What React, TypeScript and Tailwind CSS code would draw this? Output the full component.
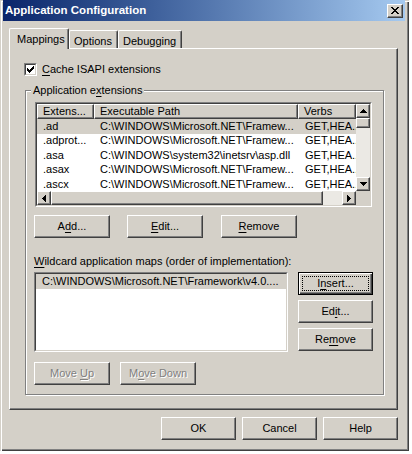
import type { ReactNode } from 'react';

const raised =
  'border border-t-white border-l-white border-r-[#404040] border-b-[#404040] bg-[#d4d0c8] shadow-[inset_-1px_-1px_#808080]';

function Btn({
  children,
  className = '',
  disabled = false,
  isDefault = false,
}: {
  children: ReactNode;
  className?: string;
  disabled?: boolean;
  isDefault?: boolean;
}) {
  if (isDefault) {
    return (
      <div
        className={`flex h-[23px] border border-black bg-[#d4d0c8] p-[3px] shadow-[inset_1px_1px_#fff,inset_-1px_-1px_#404040,inset_-2px_-2px_#808080] ${className}`}
      >
        <div className="flex flex-1 items-center justify-center border border-dotted border-black">
          {children}
        </div>
      </div>
    );
  }
  return (
    <div
      className={`flex h-[23px] items-center justify-center ${raised} ${
        disabled ? 'text-[#808080] [text-shadow:1px_1px_0_#fff]' : ''
      } ${className}`}
    >
      {children}
    </div>
  );
}

function U({ children }: { children: ReactNode }) {
  return <span className="underline underline-offset-[2px]">{children}</span>;
}

// sunken 2px frame used by list views, list boxes and the checkbox
function Sunken({ className = '', children }: { className?: string; children: ReactNode }) {
  return (
    <div className={`flex border border-t-[#808080] border-l-[#808080] border-r-white border-b-white ${className}`}>
      <div className="flex flex-1 flex-col overflow-hidden border border-t-[#404040] border-l-[#404040] border-r-[#d4d0c8] border-b-[#d4d0c8] bg-white">
        {children}
      </div>
    </div>
  );
}

function Arrow({ dir }: { dir: 'up' | 'down' | 'left' | 'right' }) {
  const vertical = dir === 'up' || dir === 'down';
  const d = {
    up: 'M3 0h1v1h1v1h1v1h1v1H0V3h1V2h1V1h1z',
    down: 'M0 0h7v1H6v1H5v1H4v1H3V3H2V2H1V1H0z',
    right: 'M0 0h1v1h1v1h1v1h1v1H3v1H2v1H1v1H0z',
    left: 'M4 0H3v1H2v1H1v1H0v1h1v1h1v1h1v1h1z',
  }[dir];
  return (
    <svg
      width={vertical ? 7 : 4}
      height={vertical ? 4 : 7}
      viewBox={vertical ? '0 0 7 4' : '0 0 4 7'}
      shapeRendering="crispEdges"
    >
      <path d={d} fill="#000" />
    </svg>
  );
}

function ScrollBtn({ dir, className = '' }: { dir: 'up' | 'down' | 'left' | 'right'; className?: string }) {
  return (
    <div className={`flex items-center justify-center ${raised} ${className}`}>
      <Arrow dir={dir} />
    </div>
  );
}

const path = 'C:\\WINDOWS\\Microsoft.NET\\Framew...';
const rows = [
  ['.ad', path, 'GET,HEA...'],
  ['.adprot...', path, 'GET,HEA...'],
  ['.asa', 'C:\\WINDOWS\\system32\\inetsrv\\asp.dll', 'GET,HEA...'],
  ['.asax', path, 'GET,HEA...'],
  ['.ascx', path, 'GET,HEA...'],
];

const xPixels: [number, number, number][] = [
  [0, 0, 2], [6, 0, 2],
  [1, 1, 2], [5, 1, 2],
  [2, 2, 4],
  [3, 3, 2],
  [2, 4, 4],
  [1, 5, 2], [5, 5, 2],
  [0, 6, 2], [6, 6, 2],
];

const checkCols = [2, 3, 4, 3, 2, 1, 0];

export default function App() {
  return (
    <div className="h-[454px] w-[412px] bg-white font-['Liberation_Sans',Arial,sans-serif] text-[11px] leading-[13px] text-black">
      <div className="flex h-[451px] w-[409px] flex-col bg-[#d4d0c8] pl-[3px] pr-[4px] shadow-[inset_1px_1px_#d4d0c8,inset_2px_2px_#fff,inset_-1px_-1px_#404040,inset_-2px_-2px_#808080]">
        {/* title bar */}
        <div className="flex h-[21px] items-center bg-linear-to-r from-[#0a246a] to-[#a6caf0] pl-[2px] pr-[2px]">
          <span className="text-[11.5px] font-bold text-white">Application Configuration</span>
          <div className={`ml-auto flex h-[14px] w-[16px] items-center justify-center ${raised}`}>
            <svg width="8" height="7" viewBox="0 0 8 7" shapeRendering="crispEdges">
              {xPixels.map(([x, y, w], i) => (
                <rect key={i} x={x} y={y} width={w} height={1} fill="#000" />
              ))}
            </svg>
          </div>
        </div>

        <div className="flex flex-col pl-[6px] pt-[7px]">
          {/* tabs */}
          <div className="flex h-[20px] items-end">
            <div className="relative z-10 -mb-[1px] h-[21px] w-[60px] rounded-t-[2px] border-l border-t border-r border-l-white border-t-white border-r-[#404040] bg-[#d4d0c8] pl-[7px] pt-[4px] shadow-[inset_-1px_0_#808080]">
              Mappings
            </div>
            <div className="h-[18px] w-[49px] rounded-t-[2px] border-l border-t border-r border-l-white border-t-white border-r-[#404040] pl-[4px] pt-[4px] shadow-[inset_-1px_0_#808080]">
              Options
            </div>
            <div className="h-[18px] w-[64px] rounded-t-[2px] border-l border-t border-r border-l-white border-t-white border-r-[#404040] pl-[4px] pt-[4px] shadow-[inset_-1px_0_#808080]">
              Debugging
            </div>
          </div>

          {/* tab panel */}
          <div className="flex h-[362px] w-[389px] flex-col border border-t-white border-l-white border-r-[#404040] border-b-[#404040] shadow-[inset_-1px_-1px_#808080]">
            <div className="ml-[14px] mt-[14px] flex h-[13px] items-center gap-[5px]">
              <Sunken className="h-[13px] w-[13px]">
                <div className="flex flex-1 items-center justify-center">
                  <svg width="7" height="7" viewBox="0 0 7 7" shapeRendering="crispEdges">
                    {checkCols.map((y, x) => (
                      <rect key={x} x={x} y={y} width={1} height={3} fill="#000" />
                    ))}
                  </svg>
                </div>
              </Sunken>
              <span>
                <U>C</U>ache ISAPI extensions
              </span>
            </div>

            {/* group box */}
            <div className="ml-[15px] mt-[14px] flex h-[305px] w-[359px] flex-col border border-[#808080] shadow-[inset_1px_1px_#fff,1px_1px_#fff]">
              <span className="-mt-[7px] ml-[5px] h-[13px] self-start bg-[#d4d0c8] px-[2px]">
                Application e<U>x</U>tensions
              </span>

              {/* list view */}
              <Sunken className="ml-[9px] mt-[5px] h-[105px] w-[337px]">
                <div className="flex h-[87px]">
                  <div className="flex w-[319px] flex-col">
                    <div className="flex h-[15px]">
                      <div className={`flex w-[57px] items-center pl-[5px] ${raised}`}>Extens...</div>
                      <div className={`flex w-[204px] items-center pl-[5px] ${raised}`}>Executable Path</div>
                      <div className={`flex w-[58px] items-center pl-[5px] ${raised}`}>Verbs</div>
                    </div>
                    <div className="flex flex-1 flex-col overflow-hidden">
                      {rows.map(([ext, p, verbs], i) => (
                        <div
                          key={i}
                          className={`flex h-[14.5px] shrink-0 items-center whitespace-nowrap ${
                            i === 0 ? 'bg-[#d4d0c8]' : ''
                          }`}
                        >
                          <div className="w-[57px] overflow-hidden pl-[6px]">{ext}</div>
                          <div className="w-[204px] overflow-hidden pl-[6px]">{p}</div>
                          <div className="w-[58px] overflow-hidden pl-[7px]">{verbs}</div>
                        </div>
                      ))}
                    </div>
                  </div>
                  <div className="flex w-[14px] flex-col">
                    <ScrollBtn dir="up" className="h-[14px]" />
                    <div className={`h-[10px] ${raised}`} />
                    <div className="flex-1 bg-[#ebe9e4]" />
                    <ScrollBtn dir="down" className="h-[14px]" />
                  </div>
                </div>
                <div className="flex h-[14px]">
                  <ScrollBtn dir="left" className="w-[14px]" />
                  <div className={`w-[272px] ${raised}`} />
                  <div className="w-[19px] bg-[#ebe9e4]" />
                  <ScrollBtn dir="right" className="w-[14px]" />
                  <div className="flex-1 bg-[#d4d0c8]" />
                </div>
              </Sunken>

              <div className="ml-[8px] mt-[8px] flex">
                <Btn className="w-[76px]">
                  <span>
                    A<U>d</U>d...
                  </span>
                </Btn>
                <Btn className="ml-[17px] w-[76px]">
                  <span>
                    <U>E</U>dit...
                  </span>
                </Btn>
                <Btn className="ml-[18px] w-[76px]">
                  <span>
                    <U>R</U>emove
                  </span>
                </Btn>
              </div>

              <div className="ml-[8px] mt-[17px] h-[13px]">
                <U>W</U>ildcard application maps (order of implementation):
              </div>

              <div className="ml-[8px] mt-[4px] flex">
                <Sunken className="h-[80px] w-[254px]">
                  <div className="flex h-[15px] items-center whitespace-nowrap bg-[#d4d0c8] pl-[6px]">
                    {'C:\\WINDOWS\\Microsoft.NET\\Framework\\v4.0....'}
                  </div>
                </Sunken>
                <div className="ml-[10px] flex flex-col gap-[5px]">
                  <Btn isDefault className="w-[75px]">
                    <span>
                      I<U>n</U>sert...
                    </span>
                  </Btn>
                  <Btn className="w-[75px]">
                    <span>
                      Ed<U>i</U>t...
                    </span>
                  </Btn>
                  <Btn className="w-[75px]">
                    <span>
                      Re<U>m</U>ove
                    </span>
                  </Btn>
                </div>
              </div>

              <div className="ml-[8px] mt-[10px] flex">
                <Btn disabled className="w-[76px]">
                  <span>
                    Move <U>U</U>p
                  </span>
                </Btn>
                <Btn disabled className="ml-[10px] w-[76px]">
                  <span>
                    M<U>o</U>ve Down
                  </span>
                </Btn>
              </div>
            </div>
          </div>

          {/* dialog buttons */}
          <div className="mt-[7px] flex w-[389px] justify-end gap-[6px]">
            <Btn className="w-[75px]">OK</Btn>
            <Btn className="w-[75px]">Cancel</Btn>
            <Btn className="w-[75px]">Help</Btn>
          </div>
        </div>
      </div>
    </div>
  );
}
